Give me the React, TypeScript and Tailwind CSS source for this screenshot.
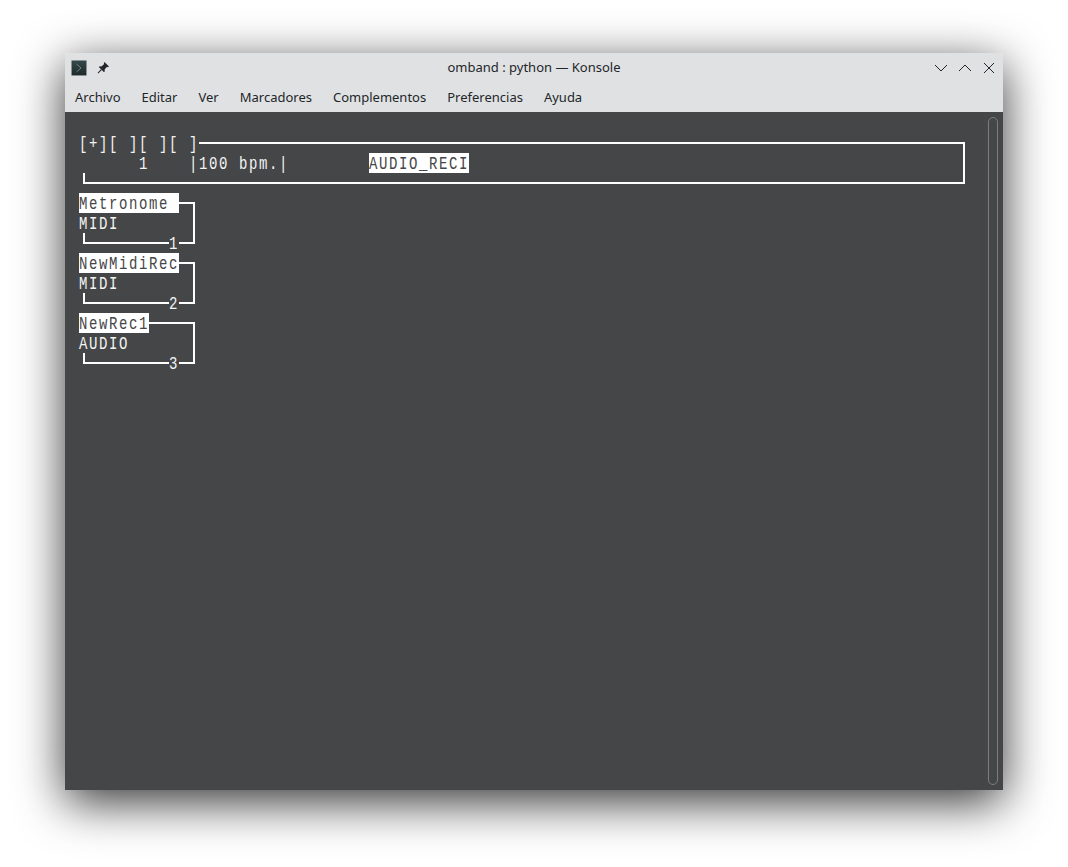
const MENU = ["Archivo", "Editar", "Ver", "Marcadores", "Complementos", "Preferencias", "Ayuda"];

const TRACKS = [
  { name: "Metronome ", kind: "MIDI", num: "1" },
  { name: "NewMidiRec", kind: "MIDI", num: "2" },
  { name: "NewRec1", kind: "AUDIO", num: "3" },
];

// terminal glyphs are narrow and tall, so stretch a smaller mono font to fit the 10x20 cell
function Term({ children }: { children: string }) {
  return <span className="inline-block leading-[14px] scale-y-[1.35] translate-y-[1px]">{children}</span>;
}

function TitleBar() {
  return (
    <div className="h-[59px] shrink-0 bg-[#dfe1e3] rounded-t-[3px] text-[#232629] font-['Noto_Sans',sans-serif] text-[13px]">
      <div className="h-[29px] flex items-center pl-[6px] pr-[6px]">
        <div className="flex-1 flex items-center">
          <div className="w-4 h-4 rounded-[1px] bg-gradient-to-b from-[#34484a] to-[#1f2a2c] border border-[#8a9090] flex items-center justify-center">
            <svg width="10" height="12" viewBox="0 0 10 12" fill="none" stroke="#76807f" strokeWidth="1">
              <path d="M2.5 2 L7 6 L2.5 10" />
            </svg>
          </div>
          <svg className="ml-[8px]" width="16" height="16" viewBox="0 0 16 16" fill="#232629">
            <path d="M9.5 2 L14 6.5 L12.8 7.2 L12 6.8 L9.6 9.6 L9.8 11.6 L8.8 12 L4 7.2 L4.4 6.2 L6.4 6.4 L9.2 4 L8.8 3.2 Z" />
            <path d="M6 9.2 L6.8 10 L3.2 13.4 L2.6 12.8 Z" />
          </svg>
        </div>
        <div>omband : python — Konsole</div>
        <div className="flex-1 flex items-center justify-end gap-[8px]">
          <svg width="16" height="16" viewBox="0 0 16 16" fill="none" stroke="#232629" strokeWidth="1">
            <path d="M2 5 L8 11 L14 5" />
          </svg>
          <svg width="16" height="16" viewBox="0 0 16 16" fill="none" stroke="#232629" strokeWidth="1">
            <path d="M2 11 L8 5 L14 11" />
          </svg>
          <svg width="16" height="16" viewBox="0 0 16 16" fill="none" stroke="#232629" strokeWidth="1">
            <path d="M3 3 L13 13 M13 3 L3 13" />
          </svg>
        </div>
      </div>
      <div className="h-[30px] pt-[1px] flex items-center pl-[10px] gap-[21px]">
        {MENU.map((m) => (
          <span key={m}>{m}</span>
        ))}
      </div>
    </div>
  );
}

function Track({ name, kind, num }: { name: string; kind: string; num: string }) {
  return (
    <div className="w-[116px]">
      <div className="flex h-5">
        <div className="w-[100px] h-5 flex">
          <span className="bg-white text-[#454648]">
            <Term>{name}</Term>
          </span>
          <div className="flex-1 mt-[9px] h-[2px] bg-white" />
        </div>
        <div className="w-4 h-[11px] mt-[9px] border-t-2 border-r-2 border-white" />
      </div>
      <div className="flex h-5">
        <span className="w-[100px]">
          <Term>{kind}</Term>
        </span>
        <div className="w-4 border-r-2 border-white" />
      </div>
      <div className="flex h-5">
        <div className="ml-[4px] w-[86px] h-[11px] border-l-2 border-b-2 border-white" />
        <span className="w-[10px]">
          <Term>{num}</Term>
        </span>
        <div className="w-4 h-[11px] border-r-2 border-b-2 border-white" />
      </div>
    </div>
  );
}

export default function App() {
  return (
    <div className="w-[1068px] h-[867px] bg-white overflow-hidden pt-[53px] pl-[65px]">
      <div className="w-[938px] h-[737px] flex flex-col rounded-t-[3px] shadow-[0_12px_48px_rgba(0,0,0,0.8)]">
        <TitleBar />
        <div className="flex-1 flex bg-[#454648] text-[#f4f4f4] font-['Liberation_Mono',monospace] text-[14px] tracking-[1.6px] leading-5 whitespace-pre">
          <div className="flex-1 pt-[21px] pl-[14px]">
            <div className="w-[886px]">
              <div className="flex h-5">
                <span className="w-[120px]">
                  <Term>[+][ ][ ][ ]</Term>
                </span>
                <div className="flex-1 h-[11px] mt-[9px] border-t-2 border-r-2 border-white" />
              </div>
              <div className="flex h-5 border-r-2 border-white">
                <span>
                  <Term>{"      1    |100 bpm.|        "}</Term>
                </span>
                <span className="bg-white text-[#454648]">
                  <Term>AUDIO_RECI</Term>
                </span>
              </div>
              <div className="ml-[4px] h-[11px] border-l-2 border-b-2 border-r-2 border-white" />
            </div>
            <div className="mt-[9px]">
              {TRACKS.map((t) => (
                <Track key={t.num} {...t} />
              ))}
            </div>
          </div>
          <div className="w-[21px] shrink-0 border-l border-[#424345] py-[5px] px-[5px]">
            <div className="w-[10px] h-full rounded-full border border-[#7c7d7f]" />
          </div>
        </div>
      </div>
    </div>
  );
}
